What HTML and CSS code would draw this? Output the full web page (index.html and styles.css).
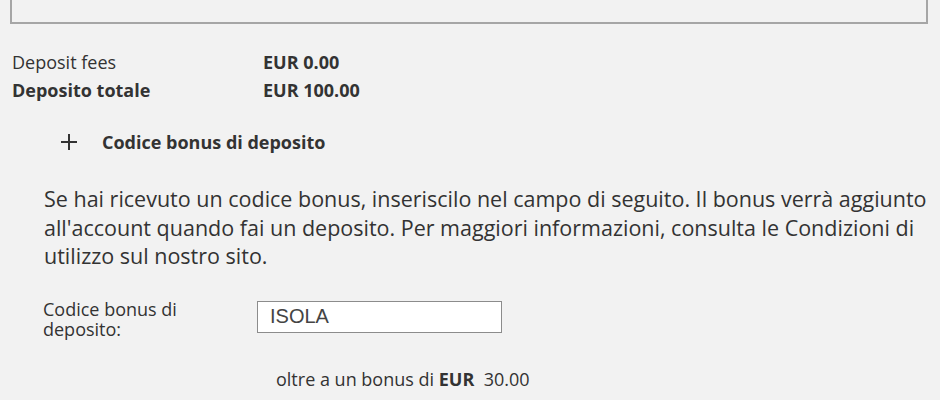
FILE: index.html
```html
<!DOCTYPE html>
<html lang="it">
<head>
    <meta charset="UTF-8">
    <title>Deposito</title>
    <link rel="stylesheet" href="styles.css">
</head>
<body>
    <div class="top-box"></div>

    <div class="summary">
        <div class="summary-row">
            <span class="summary-label">Deposit fees</span>
            <span class="summary-value">EUR 0.00</span>
        </div>
        <div class="summary-row total">
            <span class="summary-label">Deposito totale</span>
            <span class="summary-value">EUR 100.00</span>
        </div>
    </div>

    <div class="bonus">
        <div class="bonus-toggle">
            <svg class="plus" width="18" height="18" viewBox="0 0 18 18">
                <path d="M9 1v16M1 9h16" stroke="#333" stroke-width="2" fill="none"/>
            </svg>
            <span>Codice bonus di deposito</span>
        </div>

        <p class="bonus-info">Se hai ricevuto un codice bonus, inseriscilo nel campo di seguito. Il bonus verrà aggiunto all'account quando fai un deposito. Per maggiori informazioni, consulta le Condizioni di utilizzo sul nostro sito.</p>

        <div class="bonus-field">
            <label for="bonusCode">Codice bonus di deposito:</label>
            <input type="text" id="bonusCode" value="ISOLA">
        </div>

        <div class="bonus-extra">oltre a un bonus di <b>EUR</b>&nbsp; 30.00</div>
    </div>
</body>
</html>
```

FILE: styles.css
```css
body {
    font-family: "Open Sans", Arial, sans-serif;
    background-color: #f2f2f2;
    color: #333;
    margin: 0;
    padding: 0 12px;
    font-size: 18px;
}

.top-box {
    height: 24px;
    margin: -2px 0 0 -2px;
    width: 914px;
    border: 2px solid #a6a6a6;
    border-top: none;
}

.summary {
    margin-top: 24px;
}

.summary-row {
    display: flex;
    height: 28px;
    align-items: center;
}

.summary-label {
    width: 251px;
}

.summary-value {
    font-weight: bold;
}

.total {
    font-weight: bold;
}

.bonus {
    padding-left: 31px;
}

.bonus-toggle {
    display: flex;
    align-items: center;
    height: 24px;
    margin: 26px 0 0 17px;
    font-weight: bold;
}

.plus {
    margin-right: 24px;
}

.bonus-info {
    font-size: 21.5px;
    line-height: 28.5px;
    margin: 31px 0 0 1px;
}

.bonus-field {
    display: flex;
    align-items: flex-start;
    margin-top: 28px;
}

.bonus-field label {
    width: 150px;
    margin-right: 64px;
    line-height: 20px;
}

.bonus-field input {
    width: 245px;
    height: 32px;
    margin-top: 2px;
    box-sizing: border-box;
    border: 1px solid #8c8c8c;
    background: #fff;
    padding: 0 12px;
    font-family: "Liberation Sans", Arial, sans-serif;
    font-size: 20px;
    color: #444;
}

.bonus-extra {
    margin: 28px 0 0 233px;
    line-height: 24px;
}
```
